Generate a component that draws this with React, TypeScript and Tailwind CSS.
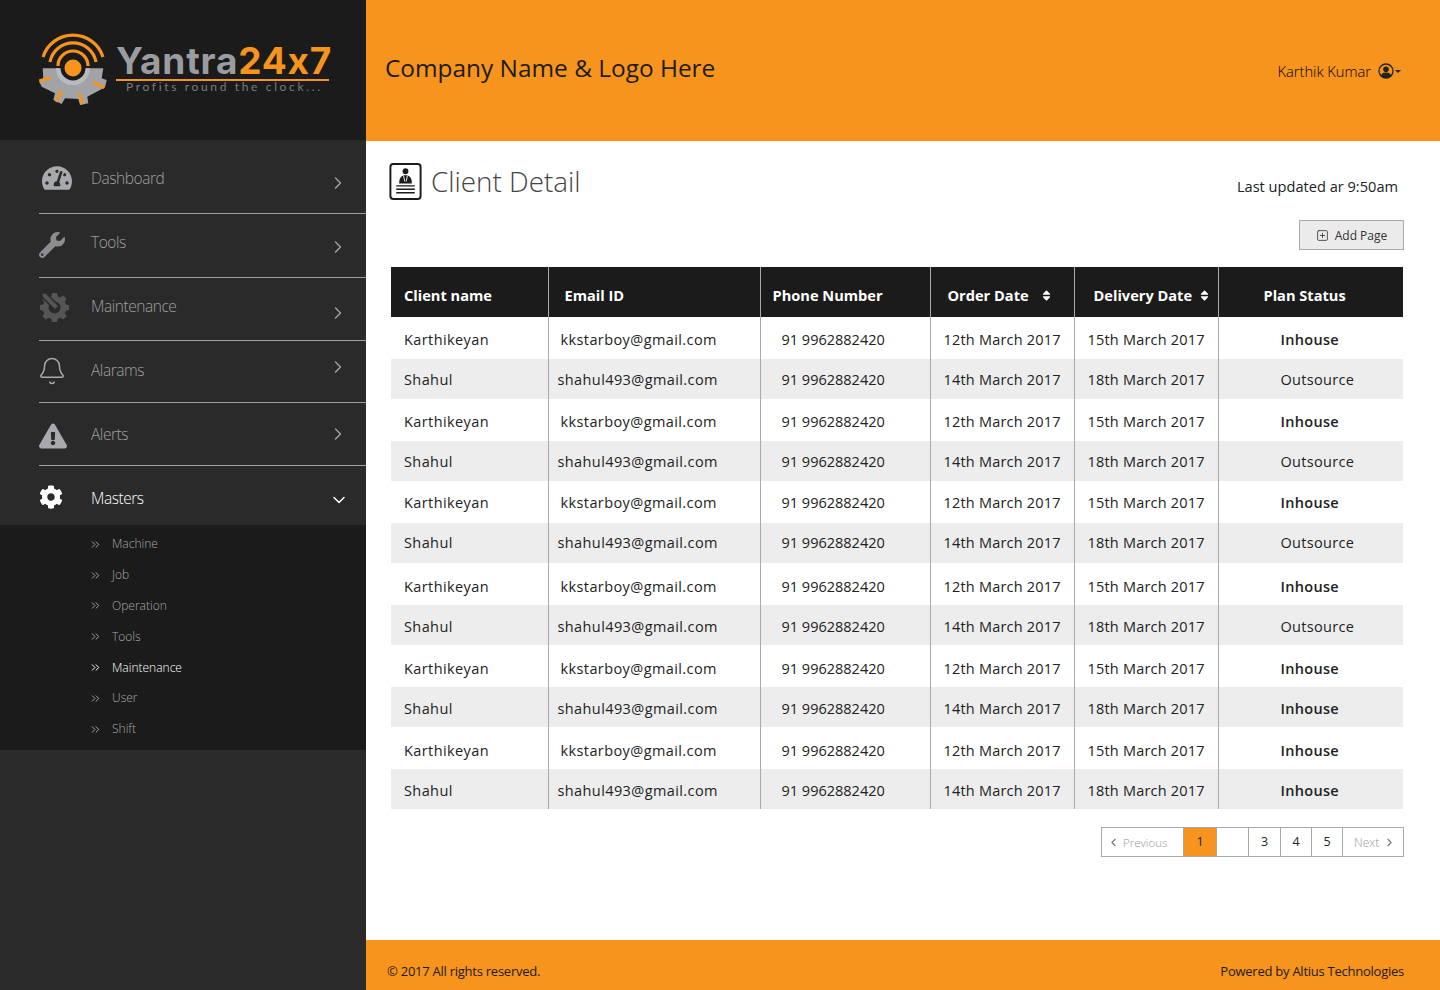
import React from 'react';
import { ChevronRight, ChevronDown, ChevronLeft, ChevronsRight, Bell, SquarePlus } from 'lucide-react';
import { FaTachometerAlt, FaWrench, FaExclamationTriangle, FaCog, FaSort } from 'react-icons/fa';

const YantraLogo = () => (
  <svg width="84" height="84" viewBox="0 0 84 84" className="shrink-0">
    <g fill="none" stroke="#f7941d" strokeWidth="3.2">
      <path d="M6 24 A31.500 31.500 0 0 1 66 24" />
      <path d="M13 29 A23.400 23.400 0 0 1 59 29" />
      <path d="M21 33 A15 15 0 0 1 51 33" />
    </g>
    <path
      d="M5.700 35.300 L6.300 45.300 L2.300 48.700 L4.700 53.700 L18 60.300 L16.300 67 L24.700 71 L28 65.300 L41.300 66 L43 72 L51.300 70.300 L50.300 63.700 L63 57 L68 54.300 L69.700 47 L64.700 45.300 L66.300 35.300 Z"
      fill="#a2a3a6"
    />
    <path d="M19 35.300 A17 17 0 0 0 53 35.300 Z" fill="#b9babd" />
    <circle cx="36" cy="35" r="12.5" fill="#1b1b1b" />
    <circle cx="36" cy="35" r="8.500" fill="#f7941d" />
    <g stroke="#f7941d" strokeWidth="3">
      <line x1="2.300" y1="48" x2="14" y2="44.300" />
      <line x1="19" y1="68.700" x2="24.700" y2="57.700" />
      <line x1="45.700" y1="71.300" x2="42" y2="60.300" />
      <line x1="67.300" y1="54.700" x2="56.300" y2="49.300" />
    </g>
  </svg>
);

const MaintenanceIcon = () => (
  <svg width="30" height="30" viewBox="0 0 30 30" className="text-[#555] translate-y-[1px]">
    <path
      fill="currentColor"
      fillRule="evenodd"
      d="M13 1h5l.8 3.4 2.4 1 3-1.8 3.4 3.4-1.8 3 1 2.4L30 13v5l-3.2.8-1 2.4 1.8 3-3.4 3.4-3-1.8-2.4 1L18 30h-5l-.8-3.2-2.4-1-3 1.8-3.4-3.4 1.8-3-1-2.4L1 18v-5l3.200-.6 1-2.400-1.800-3L6.800 3.600l3 1.800 2.400-1zM15.500 9.500a6 6 0 1 0 0 12 6 6 0 0 0 0-12z"
    />
    <path d="M3 1 L7 1 L20 14 L16 18 L3 5 Z" fill="currentColor" stroke="#2a2a2a" strokeWidth="1.500" />
  </svg>
);

const ClientIcon = () => (
  <svg width="33" height="37" viewBox="0 0 33 38" className="shrink-0">
    <rect x="1" y="1" width="31" height="36" rx="3" fill="#fff" stroke="#1b1b1b" strokeWidth="2" />
    <circle cx="16.500" cy="8.500" r="3" fill="#1b1b1b" />
    <path d="M10 21 C10 14.500 12.500 12.500 16.500 12.500 C20.500 12.500 23 14.500 23 21 Z" fill="#1b1b1b" />
    <path d="M14.500 13 L15.800 19 M18.500 13 L17.200 19" stroke="#fff" strokeWidth="0.900" />
    <path d="M7 23.500h19M7 27h19M7 30.500h19" stroke="#1b1b1b" strokeWidth="1.500" />
  </svg>
);

const UserCircle = () => (
  <svg width="16" height="16" viewBox="0 0 16 16">
    <circle cx="8" cy="8" r="7" fill="none" stroke="#222" strokeWidth="1.300" />
    <circle cx="8" cy="6.300" r="2.800" fill="#222" />
    <path d="M3 13 C3.500 10 5.500 9.500 8 9.500 C10.500 9.500 12.500 10 13 13 A7 7 0 0 1 3 13 Z" fill="#222" />
  </svg>
);

const menu = [
  { label: 'Dashboard', icon: <FaTachometerAlt size={30} className="ml-[3px] text-[#a7a9ac]" />, rowClass: 'h-[74px] pt-[26px]', arrowClass: 'top-[33px]' },
  { label: 'Tools', icon: <FaWrench size={26} className="text-[#8b8d90] translate-y-[3px]" />, rowClass: 'h-[64px] pt-[16px]', arrowClass: 'top-[23px]' },
  { label: 'Maintenance', icon: <MaintenanceIcon />, rowClass: 'h-[63px] pt-[16px]', arrowClass: 'top-[25px]' },
  { label: 'Alarams', icon: <Bell size={30} strokeWidth={1.200} className="-ml-[2px] text-[#a7a9ac] translate-y-[1px]" />, rowClass: 'h-[62px] pt-[17px]', arrowClass: 'top-[16px]' },
  { label: 'Alerts', icon: <FaExclamationTriangle size={28} className="text-[#a7a9ac] translate-y-[2px]" />, rowClass: 'h-[63px] pt-[19px]', arrowClass: 'top-[21px]' },
];

const subMenu = ['Machine', 'Job', 'Operation', 'Tools', 'Maintenance', 'User', 'Shift'];

const columns = [
  { label: 'Client name', width: 'w-[157px]', headClass: 'pl-[13px]', gap: 'gap-0' },
  { label: 'Email ID', width: 'w-[212px]', headClass: 'pl-[16px]', gap: 'gap-0' },
  { label: 'Phone Number', width: 'w-[170px]', headClass: 'pl-[12px]', gap: 'gap-0' },
  { label: 'Order Date', width: 'w-[144px]', headClass: 'pl-[17px]', gap: 'gap-[11px]', sort: true },
  { label: 'Delivery Date', width: 'w-[144px]', headClass: 'pl-[19px]', gap: 'gap-[6px]', sort: true },
  { label: 'Plan Status', width: 'w-[185px]', headClass: 'pl-[45px]', gap: 'gap-0' },
];

const clients = [
  { status: 'Inhouse', h: 'h-[42px]', pad: 'pt-[4px]' },
  { status: 'Outsource', h: 'h-[40px]', pad: 'pt-[2px]' },
  { status: 'Inhouse', h: 'h-[42px]', pad: 'pt-[4px]' },
  { status: 'Outsource', h: 'h-[40px]', pad: 'pt-[2px]' },
  { status: 'Inhouse', h: 'h-[42px]', pad: 'pt-[2px]' },
  { status: 'Outsource', h: 'h-[40px]', pad: 'pt-0' },
  { status: 'Inhouse', h: 'h-[42px]', pad: 'pt-[6px]' },
  { status: 'Outsource', h: 'h-[40px]', pad: 'pt-[4px]' },
  { status: 'Inhouse', h: 'h-[42px]', pad: 'pt-[6px]' },
  { status: 'Inhouse', h: 'h-[40px]', pad: 'pt-[4px]' },
  { status: 'Inhouse', h: 'h-[42px]', pad: 'pt-[6px]' },
  { status: 'Inhouse', h: 'h-[40px]', pad: 'pt-[4px]' },
];

const pageCellClass = 'flex items-center justify-center border-r border-[#aaa] h-full';

const App = () => {
  return (
    <div className="flex h-[990px] w-[1440px] overflow-hidden bg-white font-['Open_Sans',sans-serif]">
      <aside className="w-[366px] shrink-0 bg-[#2a2a2a] flex flex-col">
        <div className="h-[140px] bg-[#1b1b1b] flex items-start pl-[37px] pt-[33px]">
          <YantraLogo />
          <div className="-ml-[5px] mt-[9px] w-[213px]">
            <div className="font-['Inter',sans-serif] font-bold text-[37px] leading-[37px] tracking-[0.800px] whitespace-nowrap text-[#9b9ca0] border-b-2 border-[#f7941d]">
              Yantra<span className="text-[#f7941d]">24x7</span>
            </div>
            <div className="font-['Lato',sans-serif] text-[12px] leading-[12px] tracking-[2.650px] text-[#7a7b7e] pl-[10px] whitespace-nowrap">
              Profits round the clock...
            </div>
          </div>
        </div>

        <nav>
          {menu.map(item => (
            <div key={item.label} className={`relative ml-[39px] border-b border-[#a0a0a0] flex items-start ${item.rowClass}`}>
              <div className="w-[52px] h-[24px] flex items-center">{item.icon}</div>
              <span className="text-[15.500px] leading-[24px] tracking-[-0.450px] font-light text-[#a0a0a0]">{item.label}</span>
              <ChevronRight size={20} strokeWidth={1.700} className={`absolute left-[289px] text-[#a0a0a0] ${item.arrowClass}`} />
            </div>
          ))}
          <div className="relative h-[59px] ml-[39px] pt-[20px] flex items-start">
            <div className="w-[52px] h-[24px] flex items-center">
              <FaCog size={24} className="text-white -translate-y-[1px]" />
            </div>
            <span className="text-[15.500px] leading-[24px] tracking-[-0.450px] font-light text-white">Masters</span>
            <ChevronDown size={20} strokeWidth={1.800} className="absolute left-[290px] top-[24px] text-white" />
          </div>
        </nav>

        <ul className="bg-[#1b1b1b] h-[225px] pt-[4px] pl-[89px]">
          {subMenu.map(name => {
            const active = name === 'Maintenance';
            return (
              <li key={name} className={`h-[30.800px] flex items-center text-[12px] font-light ${active ? 'text-white' : 'text-[#a8a8a8]'}`}>
                <ChevronsRight size={13} strokeWidth={1.800} className="mr-[10px]" />
                {name}
              </li>
            );
          })}
        </ul>
      </aside>

      <div className="flex-1 flex flex-col min-w-0">
        <header className="h-[141px] shrink-0 bg-[#f7941d] flex items-start justify-between pl-[19px] pr-[39px]">
          <h1 className="mt-[49px] text-[24.400px] leading-[38px] text-[#1b1b1b]">Company Name &amp; Logo Here</h1>
          <div className="mt-[59px] flex items-center text-[14.700px] leading-[24px] font-light text-black">
            Karthik Kumar
            <span className="ml-[7px]"><UserCircle /></span>
            <span className="ml-[1px] w-0 h-0 border-x-[3.500px] border-x-transparent border-t-[3.500px] border-t-[#222]" />
          </div>
        </header>

        <main className="flex-1 relative pl-[25px] pr-[36px]">
          <div className="flex items-start justify-between pt-[22px] -ml-[2px] pr-[6px]">
            <div className="flex items-center gap-[9px]">
              <ClientIcon />
              <h2 className="text-[27.800px] leading-[38px] -mt-[2px] font-light text-[#444]">Client Detail</h2>
            </div>
            <div className="mt-[11px] text-[14.600px] leading-[24px] text-[#222]">Last updated ar 9:50am</div>
          </div>

          <div className="flex justify-end mt-[20px]">
            <button className="w-[105px] h-[30px] border border-[#aaa] bg-[#ebebeb] flex items-center justify-center gap-[6px] text-[12px] text-[#333]">
              <SquarePlus size={13} strokeWidth={1.500} />
              <span className="pt-[2px]">Add Page</span>
            </button>
          </div>

          <table className="mt-[17px] w-[1012px] table-fixed border-collapse">
            <thead>
              <tr className="h-[50px] bg-[#1b1b1b] text-white">
                {columns.map((col, i) => (
                  <th key={col.label} className={`${col.width} ${col.headClass} ${i < 5 ? 'border-r border-[#aaa]' : ''} text-left pt-[8px] text-[14.600px] font-bold`}>
                    <span className={`inline-flex items-center whitespace-nowrap ${col.gap}`}>
                      {col.label}
                      {col.sort && <FaSort size={13} className="text-white" />}
                    </span>
                  </th>
                ))}
              </tr>
            </thead>
            <tbody className="text-[14.500px] text-[#222]">
              {clients.map((row, i) => {
                const odd = i % 2 === 1;
                return (
                  <tr key={i} className={`${row.h} ${odd ? 'bg-[#ededed]' : 'bg-white'}`}>
                    <td className={`${row.pad} pl-[13px] border-r border-[#aaa] whitespace-nowrap tracking-[0.400px]`}>{odd ? 'Shahul' : 'Karthikeyan'}</td>
                    <td className={`${row.pad} border-r border-[#aaa] whitespace-nowrap tracking-[0.400px] ${odd ? 'pl-[9px]' : 'pl-[12px]'}`}>{odd ? 'shahul493@gmail.com' : 'kkstarboy@gmail.com'}</td>
                    <td className={`${row.pad} pl-[21px] border-r border-[#aaa] whitespace-nowrap`}>91 9962882420</td>
                    <td className={`${row.pad} pl-[13px] border-r border-[#aaa] whitespace-nowrap tracking-[0.200px]`}>{odd ? '14th March 2017' : '12th March 2017'}</td>
                    <td className={`${row.pad} pl-[13px] border-r border-[#aaa] whitespace-nowrap tracking-[0.200px]`}>{odd ? '18th March 2017' : '15th March 2017'}</td>
                    <td className={`${row.pad} pl-[62px] whitespace-nowrap tracking-[0.300px] ${row.status === 'Inhouse' ? 'font-semibold' : ''}`}>{row.status}</td>
                  </tr>
                );
              })}
            </tbody>
          </table>

          <div className="flex justify-end mt-[18px]">
            <div className="flex h-[30px] border border-[#aaa] text-[12.500px] text-[#222]">
              <div className="flex items-center border-r border-[#aaa] h-full w-[82px] pl-[5px] text-[#999] gap-[3px] text-[11.500px] font-light">
                <ChevronLeft size={13} className="text-[#777]" /> <span className="pt-[1px]">Previous</span>
              </div>
              <div className={`${pageCellClass} w-[33px] bg-[#f7941d]`}>1</div>
              <div className={`${pageCellClass} w-[32px]`} />
              <div className={`${pageCellClass} w-[32px]`}>3</div>
              <div className={`${pageCellClass} w-[31px]`}>4</div>
              <div className={`${pageCellClass} w-[31px]`}>5</div>
              <div className="flex items-center w-[60px] h-full pl-[11px] text-[#999] gap-[4px] text-[12px] font-light">
                <span className="pt-[1px]">Next</span> <ChevronRight size={13} className="text-[#777]" />
              </div>
            </div>
          </div>
        </main>

        <footer className="h-[50px] shrink-0 bg-[#f7941d] flex items-center justify-between pl-[21px] pr-[36px] pt-[13px] text-[13px] tracking-[-0.250px] text-[#1b1b1b]">
          <span>© 2017 All rights reserved.</span>
          <span>Powered by Altius Technologies</span>
        </footer>
      </div>
    </div>
  );
};

export default App;
